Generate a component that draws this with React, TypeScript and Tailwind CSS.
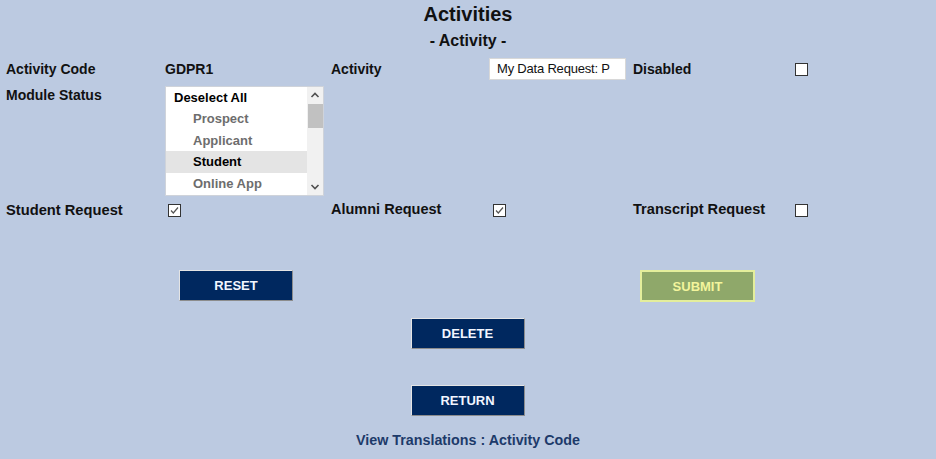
import React from "react";

const font = { fontFamily: '"Liberation Sans", Arial, sans-serif' };

function Box({ checked = false }: { checked?: boolean }) {
  return (
    <div className="w-[13px] h-[13px] border border-[#333] bg-white flex items-center justify-center">
      {checked && (
        <svg width="11" height="11" viewBox="0 0 11 11">
          <path d="M2 5.5 L4.3 8 L9 2.5" fill="none" stroke="#555" strokeWidth="1.2" />
        </svg>
      )}
    </div>
  );
}

function NavyButton({ label, className = "" }: { label: string; className?: string }) {
  return (
    <button
      className={`w-[114px] h-[31px] pt-[1px] bg-[#00285f] text-[#f2f6ff] text-[13px] font-bold border border-t-[#e4e4e4] border-l-[#e4e4e4] border-b-[#8c8c8c] border-r-[#8c8c8c] ${className}`}
    >
      {label}
    </button>
  );
}

export default function App() {
  const items = [
    { t: "Deselect All", c: "text-black", indent: false, sel: false },
    { t: "Prospect", c: "text-[#6d6d6d]", indent: true, sel: false },
    { t: "Applicant", c: "text-[#6d6d6d]", indent: true, sel: false },
    { t: "Student", c: "text-black", indent: true, sel: true },
    { t: "Online App", c: "text-[#6d6d6d]", indent: true, sel: false },
  ];
  return (
    <div style={font} className="w-[936px] h-[459px] bg-[#bccae1] text-[#111] overflow-hidden">
      <div className="pt-[2px] text-center text-[20px] font-bold leading-[24px]">Activities</div>
      <div className="mt-[5px] text-center text-[16px] font-bold leading-[20px]">- Activity -</div>

      <div className="mt-[7px] pl-[6px] grid grid-cols-[159px_166px_158px_144px_162px_auto] text-[14px] font-bold">
        {/* Row 1 */}
        <div className="h-[22px] flex items-center">Activity Code</div>
        <div className="h-[22px] flex items-center">GDPR1</div>
        <div className="h-[22px] flex items-center">Activity</div>
        <div className="h-[22px] w-[137px] bg-white border border-[#d8d8d8] flex items-center pl-[7px] overflow-hidden whitespace-nowrap text-[13px] font-normal tracking-[-0.2px]">
          My Data Request: P
        </div>
        <div className="h-[22px] flex items-center">Disabled</div>
        <div className="h-[22px] flex items-center"><Box /></div>

        {/* Row 2 */}
        <div className="mt-[6px] leading-[18px]">Module Status</div>
        <div className="mt-[6px] col-span-5">
          <div className="w-[159px] h-[110px] bg-white border border-[#cfd3da] flex">
            <div className="flex-1 text-[13px]">
              {items.map((it) => (
                <div
                  key={it.t}
                  className={`h-[21.4px] flex items-center ${it.indent ? "pl-[27px]" : "pl-[8px]"} ${it.c} ${it.sel ? "bg-[#e4e4e4]" : ""}`}
                >
                  {it.t}
                </div>
              ))}
            </div>
            <div className="w-[16px] bg-[#f1f1f1] flex flex-col items-center">
              <svg width="16" height="17" viewBox="0 0 16 17">
                <path d="M4.5 10 L8 6.5 L11.5 10" fill="none" stroke="#505050" strokeWidth="1.6" />
              </svg>
              <div className="w-[15px] h-[24px] bg-[#c1c1c1]" />
              <div className="flex-1" />
              <svg width="16" height="17" viewBox="0 0 16 17">
                <path d="M4.5 7 L8 10.5 L11.5 7" fill="none" stroke="#505050" strokeWidth="1.6" />
              </svg>
            </div>
          </div>
        </div>

        {/* Row 3 */}
        <div className="mt-[6px] h-[16px] flex items-center text-[14.7px]">Student Request</div>
        <div className="mt-[6px] h-[16px] flex items-center pl-[3px]"><Box checked /></div>
        <div className="mt-[6px] h-[16px] flex items-center text-[14.5px]">Alumni Request</div>
        <div className="mt-[6px] h-[16px] flex items-center pl-[4px]"><Box checked /></div>
        <div className="mt-[6px] h-[16px] flex items-center text-[14.6px]">Transcript Request</div>
        <div className="mt-[6px] h-[16px] flex items-center"><Box /></div>
      </div>

      <div className="mt-[52px] flex">
        <NavyButton label="RESET" className="ml-[179px]" />
        <button className="ml-[347px] w-[115px] h-[32px] pt-[1px] bg-[#8fa86a] text-[#f3f59c] text-[13px] font-bold border-2 border-[#e4ee9c]">
          SUBMIT
        </button>
      </div>

      <div className="mt-[16px] flex justify-center">
        <NavyButton label="DELETE" className="ml-[-1px]" />
      </div>

      <div className="mt-[36px] flex justify-center">
        <NavyButton label="RETURN" className="ml-[-1px]" />
      </div>

      <div className="mt-[14px] text-center text-[14.3px] font-bold text-[#1d3a6a]">
        View Translations : Activity Code
      </div>
    </div>
  );
}
